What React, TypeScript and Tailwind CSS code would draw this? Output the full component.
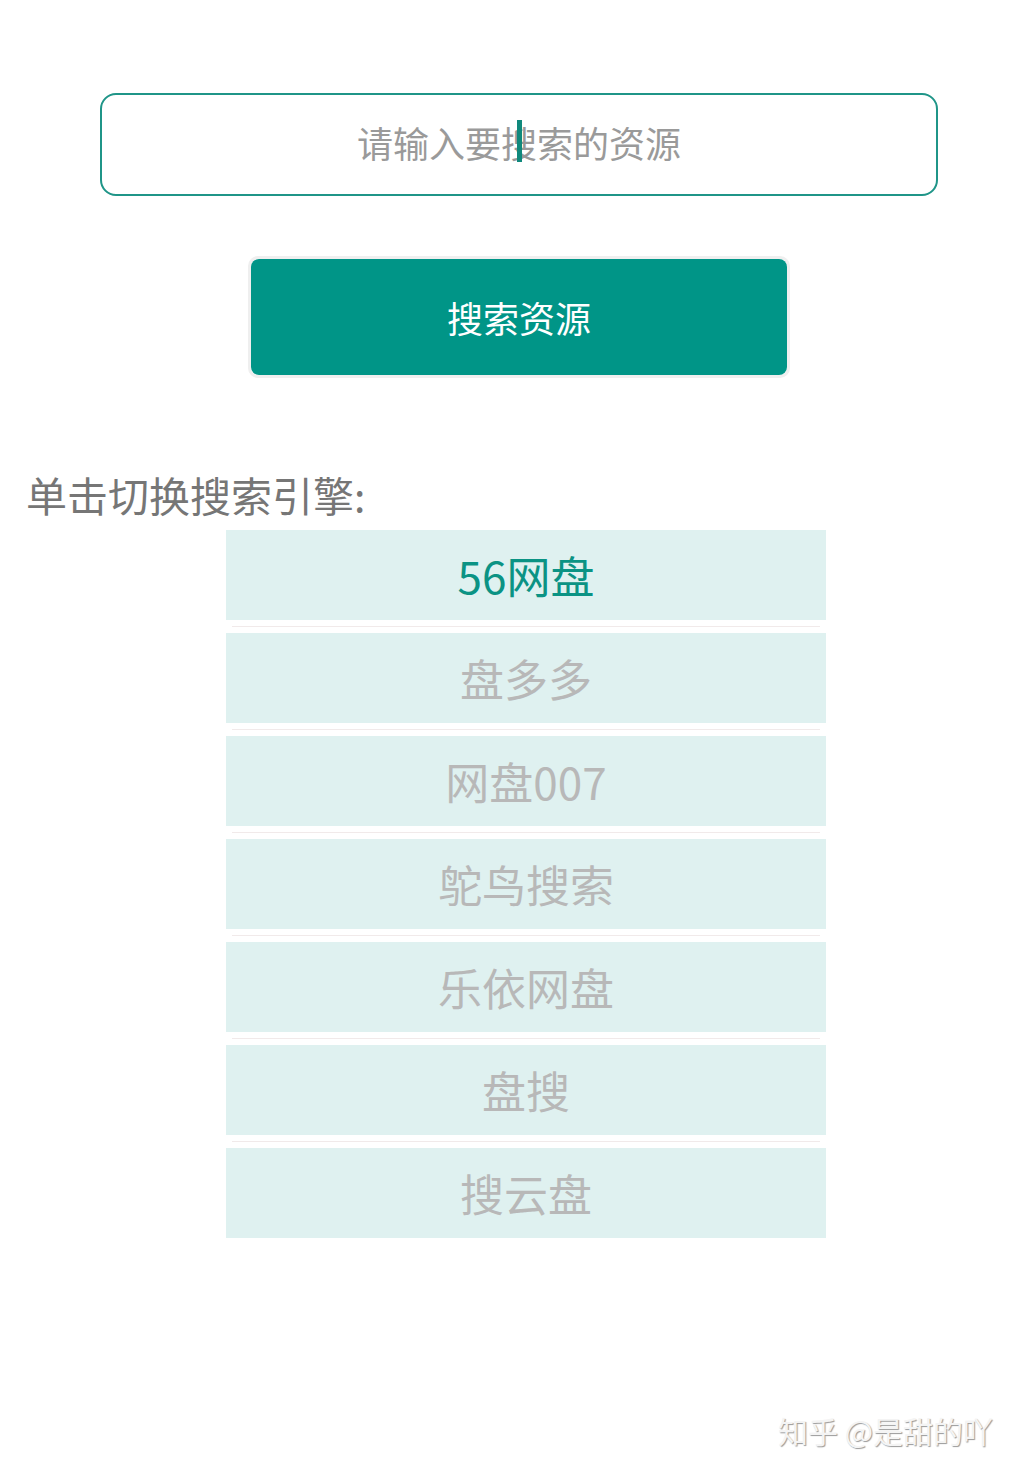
import { useState } from 'react';

const engines = ['56网盘', '盘多多', '网盘007', '鸵鸟搜索', '乐依网盘', '盘搜', '搜云盘'];

const font = { fontFamily: '"Noto Sans CJK SC", "Noto Sans", sans-serif' };

export default function App() {
    const [active, setActive] = useState(0);

    return (
        <div className="relative h-[1472px] w-[1020px] bg-white" style={font}>
            <div className="pt-[93px] pl-[100px]">
                <div className="flex h-[103px] w-[838px] items-center justify-center rounded-[16px] border-2 border-[#1f9588] pb-[6px]">
                    <div className="relative text-[36px] leading-none text-[#9a9a9a]">
                        请输入要搜索的资源
                        <span className="absolute top-[-4px] left-[160px] h-[42px] w-[5px] bg-[#10897c]" />
                    </div>
                </div>
            </div>

            <div className="mt-[60px] ml-[248px] w-fit rounded-[10px] border-[3px] border-[#efefef]">
                <button className="flex h-[116px] w-[536px] items-center justify-center rounded-[8px] bg-[#009587] text-[36px] text-white">
                    搜索资源
                </button>
            </div>

            <div className="mt-[96px] pl-[26px] text-[41px] leading-none text-[#767676]">单击切换搜索引擎:</div>

            <div className="mt-[15px] ml-[226px] flex w-[600px] flex-col">
                {engines.map((name, i) => (
                    <div key={name}>
                        {i > 0 && (
                            <div className="flex h-[13px] items-center px-[6px]">
                                <div className="h-px w-full bg-[#f1eaea]" />
                            </div>
                        )}
                        <div
                            onClick={() => setActive(i)}
                            className={`flex h-[90px] cursor-pointer items-center justify-center bg-[#dff1f0] text-[44px] ${
                                i === active ? 'text-[#0b9384]' : 'text-[#b8b8b8]'
                            }`}
                        >
                            {name}
                        </div>
                    </div>
                ))}
            </div>

            <div className="absolute top-[1408px] left-[778px] text-[30px] text-[#f4f4f4] [text-shadow:1px_1px_1px_#9a9a9a]">
                知乎 @是甜的吖
            </div>
        </div>
    );
}
